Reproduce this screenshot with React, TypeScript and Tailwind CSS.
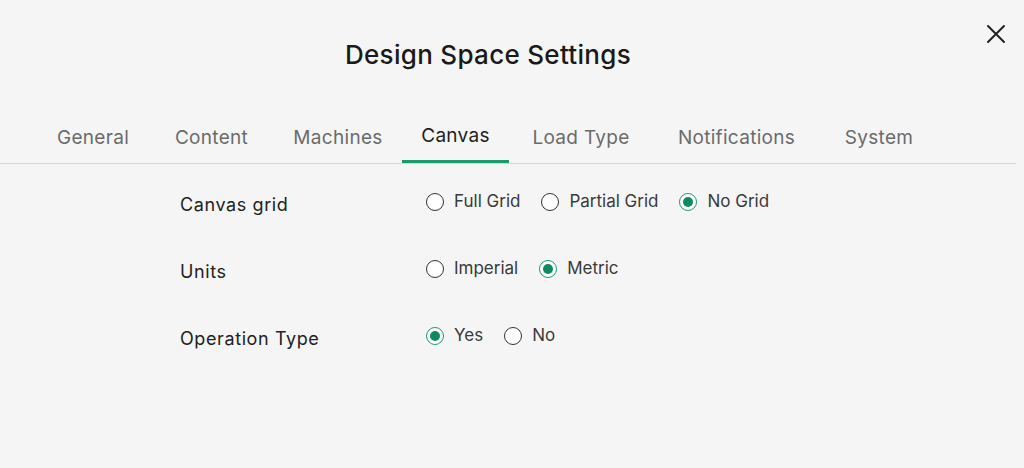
import React from "react";

const tabs: { label: string; w: string }[] = [
  { label: "General", w: "w-[112px]" },
  { label: "Content", w: "w-[125px]" },
  { label: "Machines", w: "w-[128px]" },
  { label: "Canvas", w: "w-[107px]" },
  { label: "Load Type", w: "w-[144px]" },
  { label: "Notifications", w: "w-[167px]" },
  { label: "System", w: "w-[118px]" },
];

function Radio({ label, checked }: { label: string; checked?: boolean }) {
  return (
    <div className="flex items-center gap-[10px]">
      <span
        className={
          checked
            ? "flex h-[18px] w-[18px] items-center justify-center rounded-full border-[1.5px] border-[#1d9a6c] bg-white"
            : "flex h-[18px] w-[18px] items-center justify-center rounded-full border-[1.5px] border-[#333] bg-white"
        }
      >
        {checked && <span className="h-[10px] w-[10px] rounded-full bg-[#0f8a5f]" />}
      </span>
      <span className="text-[17px] text-[#3a3a3a]">{label}</span>
    </div>
  );
}

function Row({ label, options, checked }: { label: string; options: string[]; checked: number }) {
  return (
    <div className="flex items-center h-[67px] pl-[180px]">
      <div className="w-[246px] whitespace-nowrap text-[18px] tracking-[0.6px] text-[#222]">{label}</div>
      <div className="flex items-center gap-[21px] -mt-[5px]">
        {options.map((o, i) => (
          <Radio key={o} label={o} checked={i === checked} />
        ))}
      </div>
    </div>
  );
}

export default function App() {
  return (
    <div
      className="relative h-[468px] w-[1024px] bg-[#f5f5f5] overflow-hidden"
      style={{ fontFamily: "Inter, 'Open Sans', sans-serif" }}
    >
      <button className="absolute right-[18px] top-[24px] text-[#222]">
        <svg width="20" height="20" viewBox="0 0 20 20" fill="none" stroke="currentColor" strokeWidth="2" strokeLinecap="round">
          <path d="M2 2 L18 18 M18 2 L2 18" />
        </svg>
      </button>
      <div className="pt-[36px] flex justify-center pr-[48px]">
        <h1 className="text-[26px] font-medium tracking-[0.3px] text-[#1a1a1a] leading-[38px]">Design Space Settings</h1>
      </div>
      <div className="mt-[35px] w-[1016px] border-b border-[#d6d6d6]">
        <div className="flex pl-[37px]">
          {tabs.map((t) => (
            <div
              key={t.label}
              className={
                t.label === "Canvas"
                  ? `${t.w} h-[54px] flex items-center justify-center pt-[4px] whitespace-nowrap text-[19px] tracking-[0.3px] text-[#222] border-b-[3px] border-[#1d9a6c] -mb-[2px]`
                  : `${t.w} h-[54px] flex items-center justify-center pt-[4px] whitespace-nowrap text-[19px] tracking-[0.3px] text-[#6b6b6b]`
              }
            >
              {t.label}
            </div>
          ))}
        </div>
      </div>
      <div className="pt-[7px]">
        <Row label="Canvas grid" options={["Full Grid", "Partial Grid", "No Grid"]} checked={2} />
        <Row label="Units" options={["Imperial", "Metric"]} checked={1} />
        <Row label="Operation Type" options={["Yes", "No"]} checked={0} />
      </div>
    </div>
  );
}
